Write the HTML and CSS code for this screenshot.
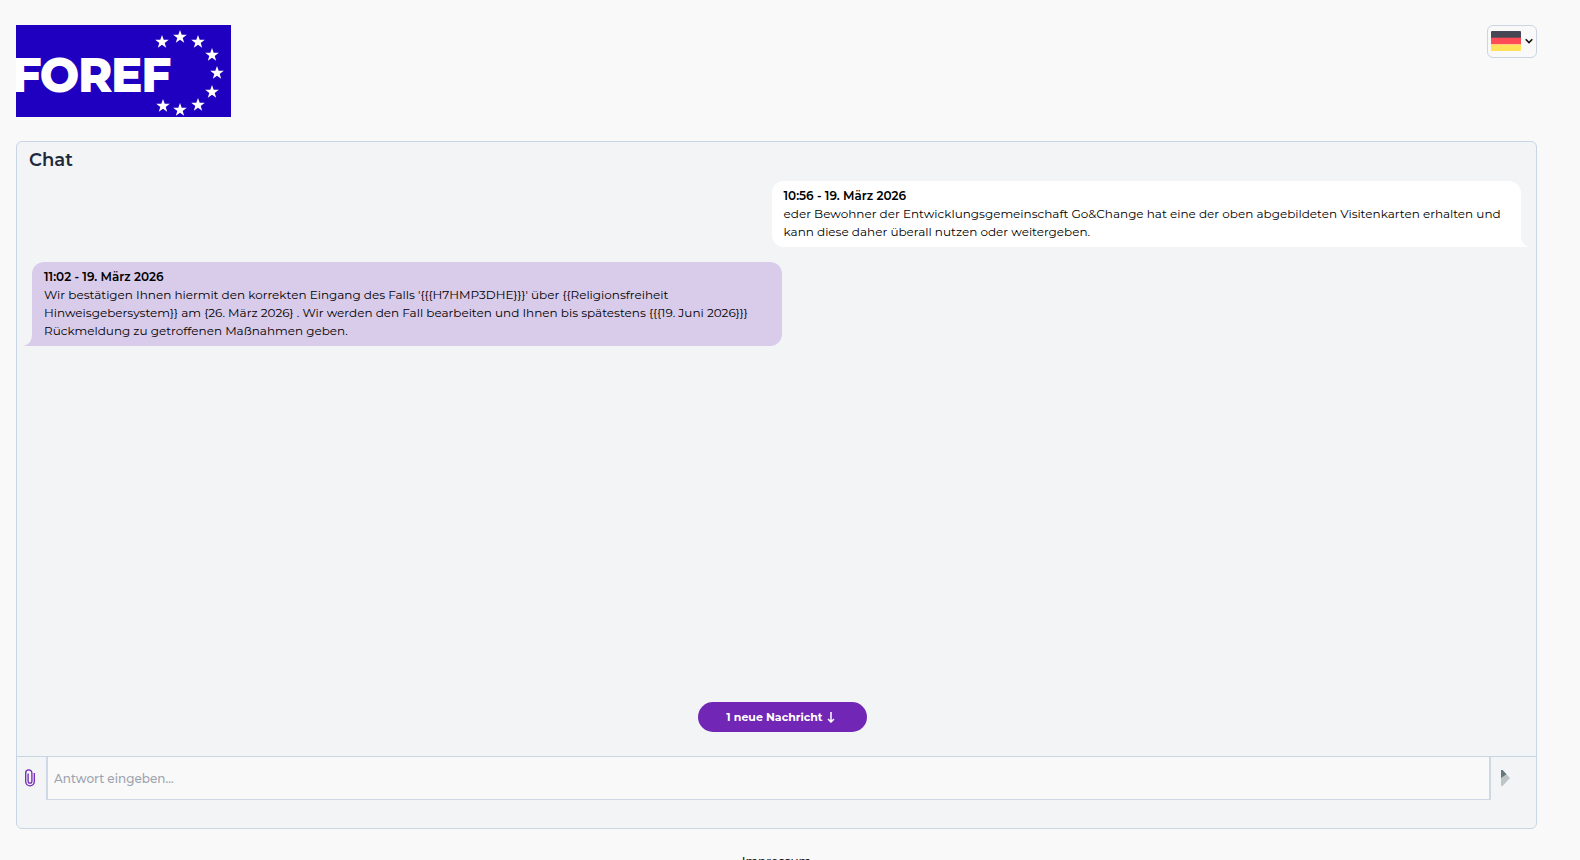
FILE: index.html
```html
<!DOCTYPE html>
<html lang="de">
<head>
    <meta charset="UTF-8">
    <meta name="viewport" content="width=device-width, initial-scale=1.0">
    <title>Chat</title>
    <link rel="stylesheet" href="styles.css">
</head>
<body>
    <div class="page">
        <header class="header">
            <a class="logo" href="#">
                <svg width="215" height="92" viewBox="0 0 215 92">
                    <defs>
                        <path id="star" d="M0-7L1.7-2.2L6.8-2.2L2.7.9L4.2 5.8L0 2.8L-4.2 5.8L-2.7.9L-6.8-2.2L-1.7-2.2Z"/>
                    </defs>
                    <rect width="215" height="92" fill="#1f00c0"/>
                    <text class="logo-text" x="-4" y="66">FOREF</text>
                    <g fill="#fff">
                        <use href="#star" x="146" y="17"/>
                        <use href="#star" x="164" y="12"/>
                        <use href="#star" x="182" y="17"/>
                        <use href="#star" x="196" y="30"/>
                        <use href="#star" x="201" y="48"/>
                        <use href="#star" x="196" y="67"/>
                        <use href="#star" x="182" y="80"/>
                        <use href="#star" x="164" y="85"/>
                        <use href="#star" x="147" y="81"/>
                    </g>
                </svg>
            </a>
            <button class="language" type="button" aria-label="Deutsch" aria-haspopup="listbox">
                <svg width="30" height="20" viewBox="0 0 30 20">
                    <path fill="#464655" d="M1 0H29a1 1 0 0 1 1 1V7H0V1a1 1 0 0 1 1-1Z"/>
                    <path fill="#ff4b55" d="M0 6.7H30V13.4H0Z"/>
                    <path fill="#ffe15a" d="M0 13.4H30V19a1 1 0 0 1-1 1H1a1 1 0 0 1-1-1Z"/>
                </svg>
                <svg width="8" height="6" viewBox="0 0 8 6">
                    <path d="M.7 1.2L4 4.5L7.3 1.2" fill="none" stroke="#111" stroke-width="1.6"/>
                </svg>
            </button>
        </header>

        <main class="chat">
            <h1 class="chat-title">Chat</h1>
            <div class="messages">
                <div class="message sent">
                    <p class="time">10:56 - 19. März 2026</p>
                    <p>eder Bewohner der Entwicklungsgemeinschaft Go&amp;Change hat eine der oben abgebildeten Visitenkarten erhalten und kann diese daher überall nutzen oder weitergeben.</p>
                    <svg class="tail" width="9" height="12" viewBox="0 0 9 12"><path d="M0 0V12H9C4 11 0 8 0 0Z" fill="#fff"/></svg>
                </div>
                <div class="message received">
                    <p class="time">11:02 - 19. März 2026</p>
                    <p>Wir bestätigen Ihnen hiermit den korrekten Eingang des Falls '{{{H7HMP3DHE}}}' über {{Religionsfreiheit Hinweisgebersystem}} am {26. März 2026} . Wir werden den Fall bearbeiten und Ihnen bis spätestens {{{19. Juni 2026}}} Rückmeldung zu getroffenen Maßnahmen geben.</p>
                    <svg class="tail" width="9" height="12" viewBox="0 0 9 12"><path d="M9 0V12H0C5 11 9 8 9 0Z" fill="#d9cbea"/></svg>
                </div>
            </div>
            <button class="new-message" type="button">
                1 neue Nachricht
                <svg width="8" height="11" viewBox="0 0 8 11">
                    <path d="M4 0V9.5M1 7L4 10L7 7" fill="none" stroke="#fff" stroke-width="1.5"/>
                </svg>
            </button>
            <form class="reply">
                <button class="attach" type="button" aria-label="Datei anhängen">
                    <svg width="10" height="18" viewBox="0 0 10 18">
                        <path d="M9.3 4V12.6A4.3 4.3 0 0 1 .7 12.6V3.9A3.1 3.1 0 0 1 6.9 3.9V12.2A1.9 1.9 0 0 1 3.1 12.2V4.5" fill="none" stroke="#7126b5" stroke-width="1.3"/>
                    </svg>
                </button>
                <input class="reply-input" type="text" placeholder="Antwort eingeben..." aria-label="Antwort eingeben">
                <button class="send" type="submit" aria-label="Senden">
                    <svg width="9" height="16" viewBox="0 0 9 16">
                        <path d="M0 0H1.5L9 8L1.5 16H0Z" fill="#bdc4c6"/>
                        <path d="M0 0H1.5L5.5 4.2L0 8Z" fill="#65777a"/>
                    </svg>
                </button>
            </form>
        </main>

        <footer class="footer">
            <a href="#">Impressum</a>
        </footer>
    </div>
</body>
</html>
```
FILE: styles.css
```css
* {
    margin: 0;
    padding: 0;
    box-sizing: border-box;
}

body {
    background-color: #f9f9f9;
    color: #000;
    font-family: Montserrat, Inter, sans-serif;
    font-size: 12px;
    line-height: 18px;
}

button {
    border: none;
    background: none;
    font-family: inherit;
    cursor: pointer;
}

.page {
    padding: 25px 43px 0 16px;
}

.header {
    display: flex;
    justify-content: space-between;
    align-items: flex-start;
    margin-bottom: 24px;
}

.logo svg {
    display: block;
}

.logo-text {
    fill: #fff;
    stroke: #fff;
    stroke-width: 2px;
    font-size: 45px;
    font-weight: 700;
}

.language {
    display: flex;
    align-items: center;
    gap: 4px;
    padding: 5px 3px 6px;
    border: 1px solid #cbd5e1;
    border-radius: 6px;
}

.chat {
    display: flex;
    flex-direction: column;
    min-height: 80vh;
    padding-bottom: 28px;
    background-color: #f2f4f6;
    border: 1px solid #c8d5e5;
    border-radius: 6px;
}

.chat-title {
    padding: 6px 12px 9px;
    color: #1e293b;
    font-size: 18px;
    font-weight: 600;
    line-height: 24px;
}

.messages {
    display: flex;
    flex: 1;
    flex-direction: column;
    gap: 15px;
    padding: 0 15px;
}

.message {
    position: relative;
    width: calc(50% + 5px);
    padding: 6px 12px;
    border-radius: 12px;
}

.sent {
    align-self: flex-end;
    background-color: #fff;
    border-bottom-right-radius: 0;
}

.received {
    align-self: flex-start;
    background-color: #d9cbea;
    border-bottom-left-radius: 0;
}

.tail {
    position: absolute;
    bottom: 0;
}

.sent .tail {
    left: 100%;
}

.received .tail {
    right: 100%;
}

.time {
    font-weight: 600;
}

.new-message {
    display: flex;
    align-self: center;
    align-items: center;
    gap: 4px;
    height: 30px;
    margin: 0 0 24px 12px;
    padding: 0 32px 0 28px;
    border-radius: 15px;
    background-color: #7126b5;
    color: #fff;
    font-size: 11px;
    font-weight: 700;
}

.reply {
    display: flex;
    border-top: 1px solid #c8d5e5;
}

.attach {
    display: flex;
    align-items: center;
    justify-content: center;
    width: 29px;
    padding: 0 4px 2px 0;
}

.reply-input {
    flex: 1;
    height: 43px;
    padding: 0 6px;
    border: solid #cfd8e5;
    border-width: 0 2px 1px;
    background-color: #f9f9f9;
    font-family: inherit;
    font-size: 12px;
    font-weight: 500;
}

.reply-input::placeholder {
    color: #9ca3af;
}

.send {
    display: flex;
    align-items: center;
    width: 45px;
    padding: 0 0 2px 10px;
}

.footer {
    padding: 24px 0;
    text-align: center;
}

.footer a {
    color: #111;
    font-size: 12px;
    font-weight: 500;
    text-decoration: none;
}
```
